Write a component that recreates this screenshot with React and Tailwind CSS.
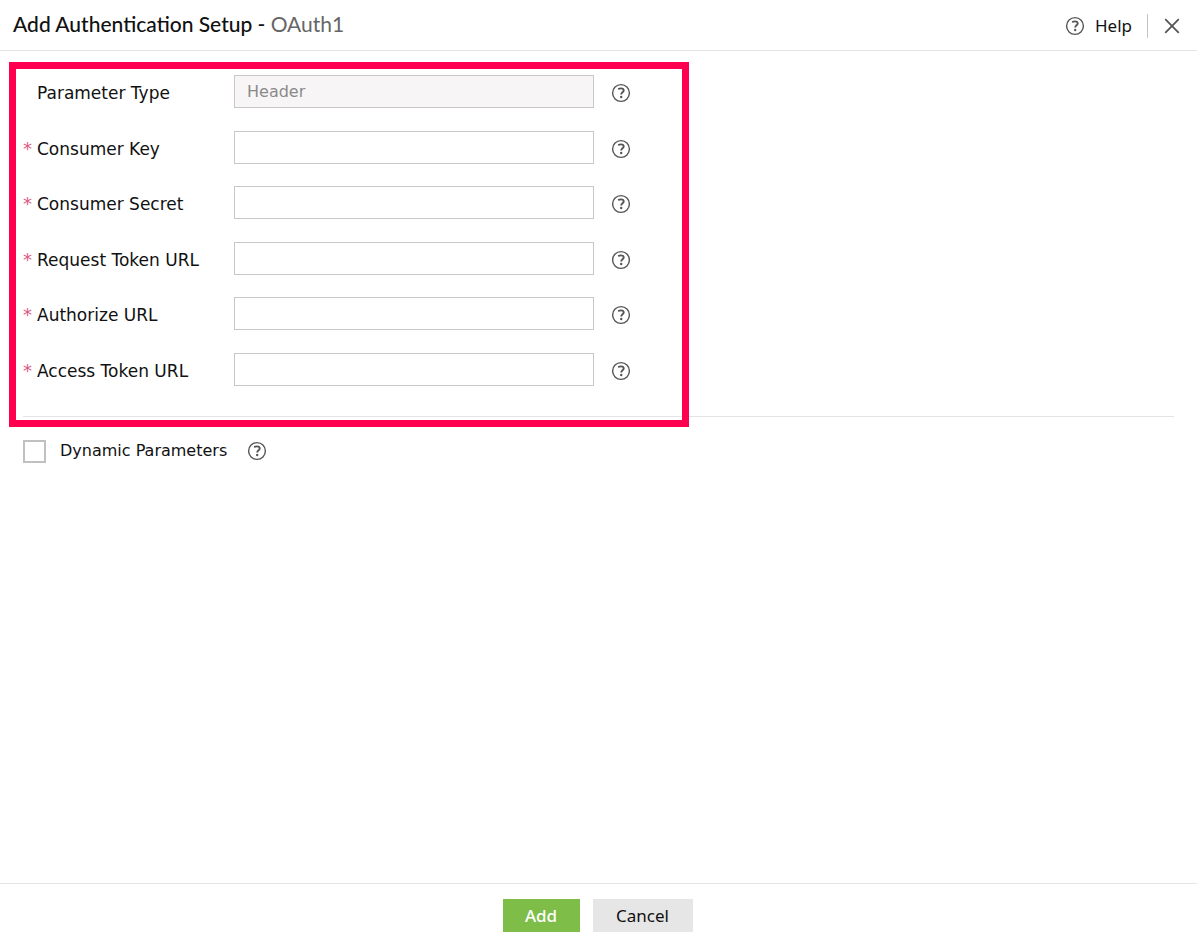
import { useState } from "react"

const fields = [
  { id: "parameterType", label: "Parameter Type", value: "Header", disabled: true },
  { id: "consumerKey", label: "Consumer Key", required: true },
  { id: "consumerSecret", label: "Consumer Secret", required: true },
  { id: "requestTokenUrl", label: "Request Token URL", required: true },
  { id: "authorizeUrl", label: "Authorize URL", required: true },
  { id: "accessTokenUrl", label: "Access Token URL", required: true },
]

const HelpIcon = () => (
  <svg
    viewBox="0 0 20 20"
    className="w-5 h-5 shrink-0"
    fill="none"
    stroke="#555555"
    aria-hidden="true"
  >
    <circle cx="10" cy="10" r="8.4" strokeWidth="1.4" />
    <path d="M7.2 6.1c.8-.5 1.8-.7 2.8-.7 1.6 0 2.7.7 2.7 2 0 1.9-2.5 1.9-2.5 4.2" strokeWidth="1.9" />
    <circle cx="10.2" cy="14" r="1.2" fill="#555555" stroke="none" />
  </svg>
)

const HelpButton = ({ label }) => (
  <button type="button" aria-label={label} className="cursor-pointer">
    <HelpIcon />
  </button>
)

const FieldRow = ({ field, value, onChange }) => (
  <div className="flex items-center even:mt-[23px] even:mb-[22px]">
    <label htmlFor={field.id} className="flex w-[211px] pt-0.5">
      <span className="w-3.5 text-lg leading-6 text-[#dc5a83]">{field.required ? "*" : ""}</span>
      {field.label}
    </label>
    <input
      id={field.id}
      type="text"
      disabled={field.disabled}
      required={field.required}
      value={value}
      onChange={(e) => onChange(field.id, e.target.value)}
      className="w-[360px] h-[33px] px-3 border border-[#c8c8c8] bg-white text-base outline-none focus:border-[#7fbf4d] disabled:bg-[#f7f5f6] disabled:text-[#8a8a8a]"
    />
    <div className="flex ml-[17px] pt-0.5">
      <HelpButton label={`Help for ${field.label}`} />
    </div>
  </div>
)

const App = () => {
  const [values, setValues] = useState(Object.fromEntries(fields.map((f) => [f.id, f.value || ""])))
  const [dynamic, setDynamic] = useState(false)

  const handleChange = (id, value) => setValues({ ...values, [id]: value })

  return (
    <form
      onSubmit={(e) => e.preventDefault()}
      className="min-h-screen flex flex-col bg-white text-[#111111] text-[17px] leading-6 font-['DejaVu_Sans',sans-serif]"
    >
      <header className="flex items-center justify-between h-[51px] pl-[13px] pr-4 border-b border-[#e4e4e4]">
        <h1 className="pb-0.5 text-[21px] leading-7 font-medium font-['Lato',sans-serif]">
          Add Authentication Setup - <span className="font-normal text-[#666666]">OAuth1</span>
        </h1>
        <div className="flex items-center pt-0.5 font-['Noto_Sans',sans-serif]">
          <a href="#help" className="flex items-center gap-2.5">
            <HelpIcon />
            Help
          </a>
          <div className="w-px h-6 mx-[15px] bg-[#c4c4c4]" />
          <button type="button" aria-label="Close" className="cursor-pointer">
            <svg viewBox="0 0 18 18" className="w-[18px] h-[18px]" stroke="#555555" strokeWidth="1.8" aria-hidden="true">
              <path d="M2.2 2.2l13.6 13.6M15.8 2.2l-13.6 13.6" />
            </svg>
          </button>
        </div>
      </header>

      <main className="flex-1 px-[23px] pt-6">
        <section className="relative pb-2 border-b border-[#e4e4e4]">
          {fields.map((field) => (
            <FieldRow key={field.id} field={field} value={values[field.id]} onChange={handleChange} />
          ))}
          {/* highlight frame around the connection settings */}
          <div className="absolute -left-3.5 -top-[13px] -bottom-[11px] w-[680px] border-[7px] border-[#ff0050] pointer-events-none" />
        </section>

        <div className="flex items-center mt-[22px]">
          <label className="flex items-center gap-3.5 text-base">
            <input
              type="checkbox"
              checked={dynamic}
              onChange={(e) => setDynamic(e.target.checked)}
              className="appearance-none w-[23px] h-[23px] border-2 border-[#c0c0c0] bg-white checked:bg-[#7fbf4d]"
            />
            Dynamic Parameters
          </label>
          <div className="flex ml-5">
            <HelpButton label="Help for Dynamic Parameters" />
          </div>
        </div>
      </main>

      <footer className="flex justify-center gap-[13px] pt-[15px] pb-[13px] pr-0.5 border-t border-[#e4e4e4] font-['Noto_Sans',sans-serif]">
        <button type="submit" className="w-[77px] h-[33px] bg-[#7dbd48] text-white font-medium cursor-pointer">
          Add
        </button>
        <button type="button" className="w-[100px] h-[33px] bg-[#e6e6e6] cursor-pointer">
          Cancel
        </button>
      </footer>
    </form>
  )
}

export default App
